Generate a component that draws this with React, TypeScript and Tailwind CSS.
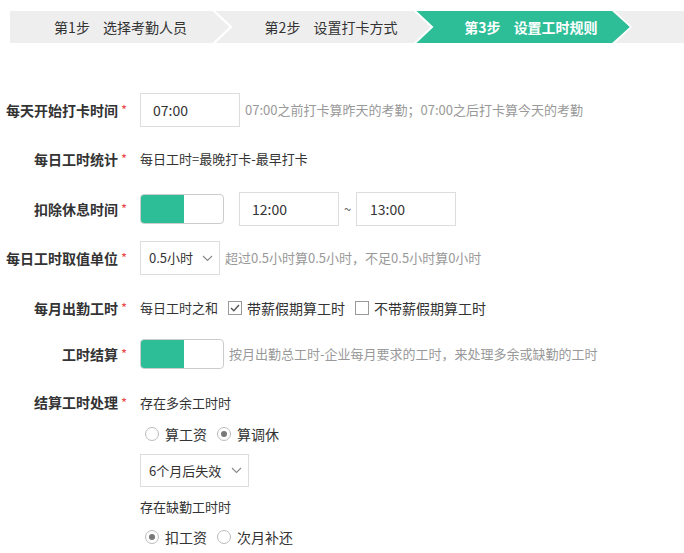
import React from "react";

const FONT = { fontFamily: '"Noto Sans CJK SC", "Liberation Sans", sans-serif' };

function Label({ text }: { text: string }) {
  return (
    <div className="w-[127px] shrink-0 flex justify-end items-center text-[14px] font-bold text-[#333]">
      <span>{text}</span>
      <span className="text-[#e64a4a] font-normal ml-[3px] text-[13px]">*</span>
    </div>
  );
}

function Toggle() {
  return (
    <div className="w-[84px] h-[30px] rounded-[4px] border border-[#cccccc] bg-white flex overflow-hidden">
      <div className="w-[43px] h-full bg-[#2dbe97]" />
    </div>
  );
}

function Chevron() {
  return (
    <svg width="11" height="7" viewBox="0 0 11 7" fill="none">
      <path d="M1 1l4.5 4.5L10 1" stroke="#888" strokeWidth="1.1" />
    </svg>
  );
}

function Radio({ checked }: { checked?: boolean }) {
  return (
    <span className="w-[14px] h-[14px] rounded-full border border-[#bbbbbb] bg-white flex items-center justify-center">
      {checked && <span className="w-[6px] h-[6px] rounded-full bg-[#777]" />}
    </span>
  );
}

function Checkbox({ checked }: { checked?: boolean }) {
  return (
    <span className="w-[14px] h-[14px] border border-[#999] bg-white flex items-center justify-center">
      {checked && (
        <svg width="10" height="8" viewBox="0 0 10 8" fill="none">
          <path d="M1 4l2.8 2.8L9 1" stroke="#555" strokeWidth="1.4" />
        </svg>
      )}
    </span>
  );
}

export default function App() {
  return (
    <div className="w-[684px] h-[553px] bg-white overflow-hidden" style={FONT}>
      {/* Steps bar */}
      <div className="relative mt-[11px] ml-[10px] h-[32px] bg-[#eeeeee]">
        <svg className="absolute left-0 top-0" width="674" height="32" viewBox="0 0 674 32">
          <polyline points="203,-1 221,16 203,33" fill="none" stroke="#ffffff" strokeWidth="2.2" />
          <polygon points="405,0 602,0 620,16 602,32 405,32 423,16" fill="#2dbe97" />
          <polyline points="404,-1 422,16 404,33" fill="none" stroke="#ffffff" strokeWidth="2" />
          <polyline points="603,-1 621,16 603,33" fill="none" stroke="#ffffff" strokeWidth="1.5" />
        </svg>
        <div className="relative flex h-full items-center text-[14px]">
          <div className="w-[221px] text-center text-[#333]">
            第1步<span className="inline-block w-[13px]" />选择考勤人员
          </div>
          <div className="w-[200px] text-center text-[#333]">
            第2步<span className="inline-block w-[13px]" />设置打卡方式
          </div>
          <div className="w-[200px] text-center text-white font-bold">
            第3步<span className="inline-block w-[13px]" />设置工时规则
          </div>
        </div>
      </div>

      {/* Form */}
      <div className="flex flex-col">
        {/* Row 1 */}
        <div className="mt-[50px] flex items-center h-[34px]">
          <Label text="每天开始打卡时间" />
          <div className="ml-[13px] w-[100px] h-[34px] border border-[#dddddd] flex items-center pl-[12px] text-[14px] text-[#333]">
            07:00
          </div>
          <div className="ml-[5px] text-[13px] text-[#999]">
            07:00之前打卡算昨天的考勤；07:00之后打卡算今天的考勤
          </div>
        </div>

        {/* Row 2 */}
        <div className="mt-[15px] flex items-center h-[34px]">
          <Label text="每日工时统计" />
          <div className="ml-[13px] text-[13px] text-[#333]">每日工时=最晚打卡-最早打卡</div>
        </div>

        {/* Row 3 */}
        <div className="mt-[16px] flex items-center h-[34px]">
          <Label text="扣除休息时间" />
          <div className="ml-[13px]">
            <Toggle />
          </div>
          <div className="ml-[15px] w-[100px] h-[34px] border border-[#dddddd] flex items-center pl-[12px] text-[14px] text-[#333]">
            12:00
          </div>
          <div className="w-[17px] text-center text-[13px] text-[#666]">~</div>
          <div className="w-[100px] h-[34px] border border-[#dddddd] flex items-center pl-[13px] text-[14px] text-[#333]">
            13:00
          </div>
        </div>

        {/* Row 4 */}
        <div className="mt-[15px] flex items-center h-[34px]">
          <Label text="每日工时取值单位" />
          <div className="ml-[13px] w-[80px] h-[34px] border border-[#dddddd] flex items-center justify-between pl-[8px] pr-[6px] text-[13px] text-[#333]">
            <span>0.5小时</span>
            <Chevron />
          </div>
          <div className="ml-[5px] text-[13px] text-[#999]">
            超过0.5小时算0.5小时，不足0.5小时算0小时
          </div>
        </div>

        {/* Row 5 */}
        <div className="mt-[16px] flex items-center h-[34px]">
          <Label text="每月出勤工时" />
          <div className="ml-[13px] text-[13px] text-[#333] flex items-center">
            <span>每日工时之和</span>
            <span className="ml-[10px]">
              <Checkbox checked />
            </span>
            <span className="ml-[5px] text-[14px]">带薪假期算工时</span>
            <span className="ml-[10px]">
              <Checkbox />
            </span>
            <span className="ml-[5px] text-[14px]">不带薪假期算工时</span>
          </div>
        </div>

        {/* Row 6 */}
        <div className="mt-[12px] flex items-center h-[34px]">
          <Label text="工时结算" />
          <div className="ml-[13px]">
            <Toggle />
          </div>
          <div className="ml-[5px] text-[13px] text-[#999]">
            按月出勤总工时-企业每月要求的工时，来处理多余或缺勤的工时
          </div>
        </div>

        {/* Row 7 */}
        <div className="mt-[22px] flex items-start">
          <div className="h-[19px] flex items-center">
            <Label text="结算工时处理" />
          </div>
          <div className="ml-[13px] flex flex-col text-[13px] text-[#333]">
            <div className="h-[19px] flex items-center">存在多余工时时</div>
            <div className="mt-[12px] h-[20px] flex items-center pl-[5px] text-[14px]">
              <Radio />
              <span className="ml-[6px]">算工资</span>
              <span className="ml-[10px]">
                <Radio checked />
              </span>
              <span className="ml-[6px]">算调休</span>
            </div>
            <div className="mt-[10px] w-[109px] h-[33px] border border-[#dddddd] flex items-center justify-between pl-[8px] pr-[6px]">
              <span>6个月后失效</span>
              <Chevron />
            </div>
            <div className="mt-[10px] h-[19px] flex items-center">存在缺勤工时时</div>
            <div className="mt-[11px] h-[20px] flex items-center pl-[5px] text-[14px]">
              <Radio checked />
              <span className="ml-[6px]">扣工资</span>
              <span className="ml-[10px]">
                <Radio />
              </span>
              <span className="ml-[6px]">次月补还</span>
            </div>
          </div>
        </div>
      </div>
    </div>
  );
}
